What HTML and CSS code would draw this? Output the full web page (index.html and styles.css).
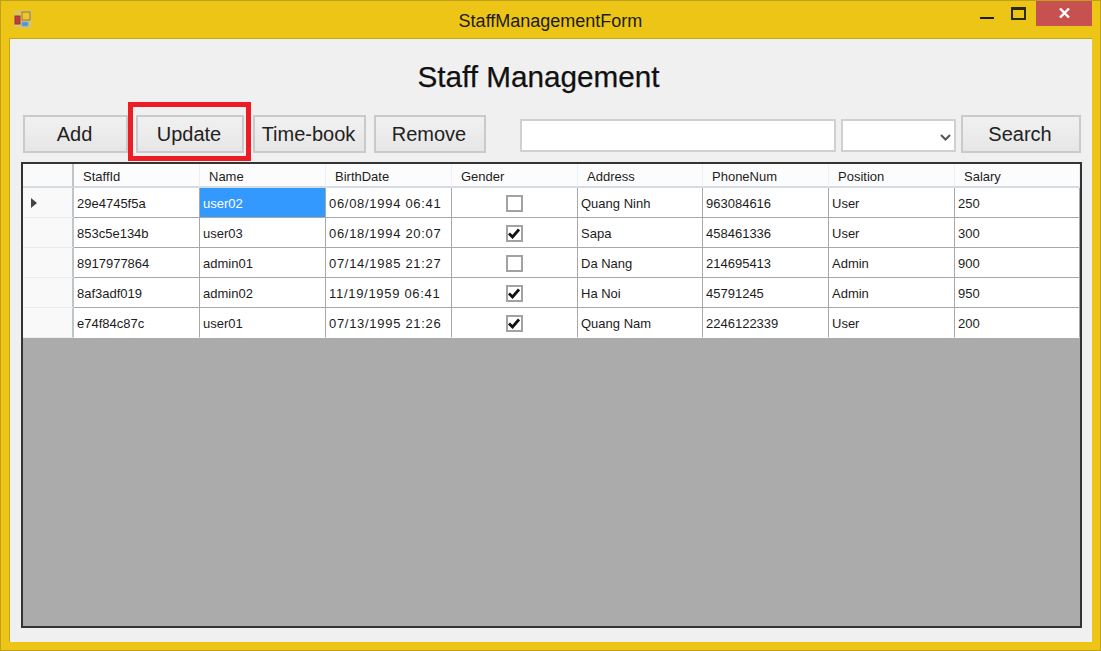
FILE: index.html
```html
<!DOCTYPE html>
<html lang="en">
<head>
<meta charset="utf-8">
<title>StaffManagementForm</title>
<link rel="stylesheet" href="styles.css">
</head>
<body>
<svg class="defs" width="0" height="0"><defs>
  <path id="tick" d="M1 5.5 L4.5 9 L11 1.5" fill="none" stroke="#111" stroke-width="2.8"/>
</defs></svg>
<div class="window">
  <header class="titlebar">
    <svg class="app-icon" width="18" height="18" viewBox="0 0 18 18">
      <rect x="0.5" y="0.5" width="17" height="17" fill="#dcc64e" stroke="#cdbf94" stroke-dasharray="2 2"/>
      <rect x="8" y="2" width="8" height="8" fill="#f5c22c" stroke="#8f7a3a"/>
      <rect x="1" y="6" width="5" height="8" fill="#c8383a" stroke="#8e3b3b"/>
      <rect x="8" y="12" width="6" height="4" fill="#4d8fe0" stroke="#7aa7dd"/>
    </svg>
    <div class="title">StaffManagementForm</div>
    <div class="controls">
      <div class="ctl min"><span class="min-bar"></span></div>
      <div class="ctl max"><span class="max-box"></span></div>
      <div class="close">
        <svg width="11" height="10" viewBox="0 0 11 10"><path d="M1 0.5 L10 9.5 M10 0.5 L1 9.5" stroke="#fff" stroke-width="2.4" fill="none"/></svg>
      </div>
    </div>
  </header>
  <main class="client">
    <h1 class="heading">Staff Management</h1>
    <div class="toolbar">
      <button class="btn add">Add</button>
      <button class="btn update">Update</button>
      <button class="btn timebook">Time-book</button>
      <button class="btn remove">Remove</button>
      <input class="search-input" type="text">
      <div class="combo">
        <svg width="11" height="7" viewBox="0 0 11 7"><path d="M1 1 L5.5 5.5 L10 1" stroke="#555" stroke-width="2" fill="none"/></svg>
      </div>
      <button class="btn search">Search</button>
    </div>
    <div class="grid">
      <table>
        <colgroup>
          <col class="c-head"><col class="c-a"><col class="c-a"><col class="c-a"><col class="c-a"><col class="c-b"><col class="c-a"><col class="c-a"><col>
        </colgroup>
        <thead>
          <tr><th></th><th>StaffId</th><th>Name</th><th>BirthDate</th><th>Gender</th><th>Address</th><th>PhoneNum</th><th>Position</th><th>Salary</th></tr>
        </thead>
        <tbody>
          <tr><th class="rowhead"><span class="arrow"></span></th><td>29e4745f5a</td><td class="sel">user02</td><td class="date">06/08/1994 06:41</td><td class="chk"><span class="box"></span></td><td>Quang Ninh</td><td>963084616</td><td>User</td><td>250</td></tr>
          <tr><th class="rowhead"></th><td>853c5e134b</td><td>user03</td><td class="date">06/18/1994 20:07</td><td class="chk"><span class="box"><svg width="12" height="11" viewBox="0 0 12 11"><use href="#tick"/></svg></span></td><td>Sapa</td><td>458461336</td><td>User</td><td>300</td></tr>
          <tr><th class="rowhead"></th><td>8917977864</td><td>admin01</td><td class="date">07/14/1985 21:27</td><td class="chk"><span class="box"></span></td><td>Da Nang</td><td>214695413</td><td>Admin</td><td>900</td></tr>
          <tr><th class="rowhead"></th><td>8af3adf019</td><td>admin02</td><td class="date">11/19/1959 06:41</td><td class="chk"><span class="box"><svg width="12" height="11" viewBox="0 0 12 11"><use href="#tick"/></svg></span></td><td>Ha Noi</td><td>45791245</td><td>Admin</td><td>950</td></tr>
          <tr><th class="rowhead"></th><td>e74f84c87c</td><td>user01</td><td class="date">07/13/1995 21:26</td><td class="chk"><span class="box"><svg width="12" height="11" viewBox="0 0 12 11"><use href="#tick"/></svg></span></td><td>Quang Nam</td><td>2246122339</td><td>User</td><td>200</td></tr>
        </tbody>
      </table>
    </div>
    <div class="highlight"></div>
  </main>
</div>
</body>
</html>
```
FILE: styles.css
```css
* { box-sizing: border-box; }
html, body { margin: 0; padding: 0; }
body { width: 1101px; height: 651px; overflow: hidden; font-family: "Liberation Sans", Arial, sans-serif; }
.defs { position: absolute; }

.window {
  width: 1101px;
  height: 651px;
  background: #edc516;
  border: 1px solid #bfa01a;
  padding: 0 8px 8px 8px;
  display: flex;
  flex-direction: column;
}

.titlebar {
  height: 37px;
  flex: none;
  display: flex;
  position: relative;
  margin: 0 -8px;
  padding-left: 13px;
}
.app-icon { margin-top: 9px; flex: none; }
.title {
  position: absolute;
  left: 0;
  right: 0;
  top: 10px;
  text-align: center;
  font-size: 18px;
  line-height: 20px;
  color: #1c1c1c;
}
.controls { margin-left: auto; display: flex; margin-right: 8px; height: 25px; position: relative; }
.ctl { position: relative; }
.min { width: 34px; }
.min-bar { display: block; width: 14px; height: 2px; background: #1c1c1c; margin: 16px 0 0 21px; }
.max { width: 43px; }
.max-box { display: block; width: 15px; height: 13px; margin: 6px 0 0 18px; border: 2px solid #2a2a1c; border-top-width: 3px; }
.close { width: 56px; background: #c75050; display: flex; align-items: center; justify-content: center; padding-bottom: 2px; }

.client {
  flex: 1;
  position: relative;
  background: #f0f0f0;
  border-top: 1px solid #c3a618;
  border-left: 1px solid #c3a618;
  padding: 0 10px 0 12px;
  display: flex;
  flex-direction: column;
}

.heading {
  margin: 21px 0 0;
  height: 34px;
  line-height: 34px;
  text-align: center;
  font-size: 29.7px;
  font-weight: 400;
  color: #111;
  -webkit-text-stroke: 0.25px #111;
  padding-right: 27px;
}

.toolbar {
  display: flex;
  align-items: flex-start;
  margin: 21px 0 0 1px;
  height: 47px;
}
.btn {
  height: 38px;
  padding: 0 2px 0 0;
  border: 2px solid #cacaca;
  background: linear-gradient(#f1f1f1, #e6e6e6);
  font-family: inherit;
  font-size: 20px;
  color: #222;
}
.add { width: 105px; }
.update { width: 108px; margin-left: 8px; }
.timebook { width: 113px; margin-left: 9px; }
.remove { width: 112px; margin-left: 8px; }
.search { width: 120px; margin-left: 5px; }
.search-input {
  width: 316px;
  height: 33px;
  margin: 4px 0 0 34px;
  border: 2px solid #d0d0d0;
  background: #fff;
  padding: 0;
}
.combo {
  width: 115px;
  height: 33px;
  margin: 4px 0 0 5px;
  border: 2px solid #d0d0d0;
  background: #fff;
  display: flex;
  align-items: center;
  justify-content: flex-end;
  padding: 3px 3px 0 0;
}

.grid {
  width: 1061px;
  height: 466px;
  margin-left: -1px;
  background: #ababab;
  border: 2px solid #333;
  overflow: hidden;
}
table {
  width: 1057px;
  table-layout: fixed;
  border-collapse: separate;
  border-spacing: 0;
  font-size: 13px;
  color: #1c1c1c;
}
.c-head { width: 51px; }
.c-a { width: 126px; }
.c-b { width: 125px; }
thead th {
  height: 24px;
  background: #fcfcfc;
  border-right: 1px solid #e8f0f8;
  border-bottom: 2px solid #d4dbe3;
  font-weight: 400;
  text-align: left;
  padding: 2px 0 0 9px;
}
thead th:first-child { border-right: 2px solid #c0c5ca; background: #fafafa; }
.rowhead {
  background: #f9f9f9;
  border-right: 2px solid #c0c5ca;
  border-bottom: 1px solid #e6edf5;
  padding: 0;
  text-align: left;
}
tbody tr { height: 30px; }
tbody td {
  background: #fff;
  border-right: 1px solid #a8a8a8;
  border-bottom: 1px solid #a8a8a8;
  padding: 1px 0 0 3px;
  white-space: nowrap;
}
tbody tr:last-child td { border-bottom-color: #fff; }
tbody td.sel { background: #3399ff; color: #fff; border-bottom-color: #a8a8a8; }
.date { letter-spacing: 0.7px; }
.arrow {
  display: block;
  width: 0;
  height: 0;
  margin-left: 8px;
  border-left: 6px solid #444;
  border-top: 5.5px solid transparent;
  border-bottom: 5.5px solid transparent;
}
.chk { text-align: center; }
tbody td.chk { padding: 1px 1px 0 0; }
.box {
  display: inline-flex;
  width: 17px;
  height: 17px;
  border: 2px solid #a2a2a2;
  background: #fff;
  vertical-align: middle;
  align-items: center;
  justify-content: center;
}

.highlight {
  position: absolute;
  left: 118px;
  top: 63px;
  width: 123px;
  height: 59px;
  border: 5px solid #ed1c24;
  pointer-events: none;
}
```
